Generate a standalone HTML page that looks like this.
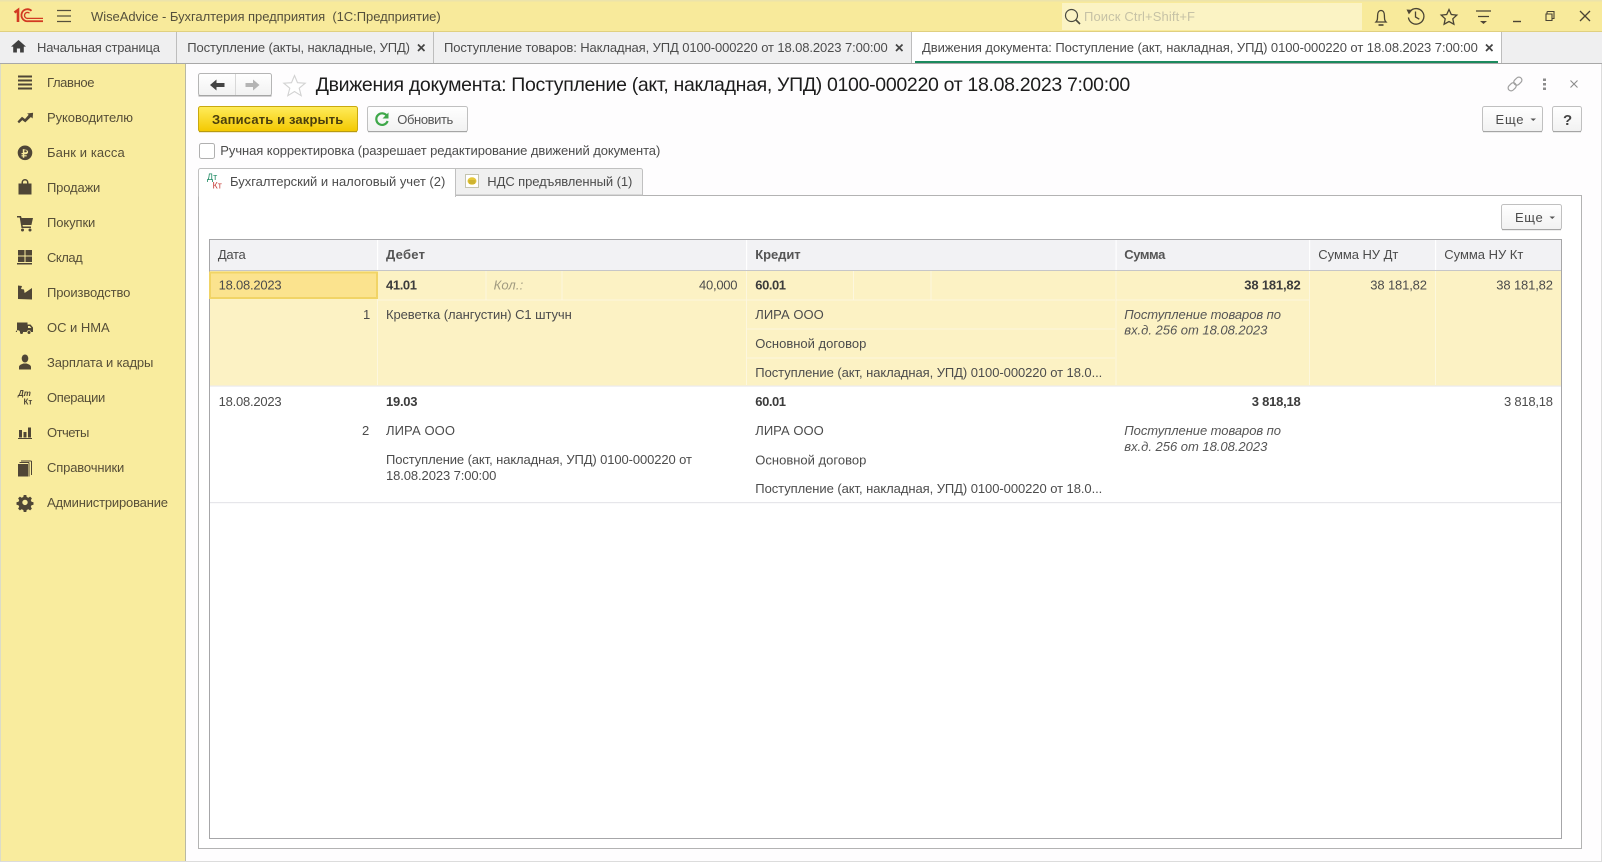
<!DOCTYPE html>
<html lang="ru">
<head>
<meta charset="utf-8">
<title>WiseAdvice - Бухгалтерия предприятия</title>
<style>
html,body{margin:0;padding:0;background:#fff;overflow:hidden}
svg{display:block;filter:blur(.3px)}
text{font-family:"Liberation Sans",Arial,sans-serif;font-size:13px;fill:#4c4c4c;white-space:pre}
.nav text{fill:#574f38}
.b{font-weight:bold;fill:#3c3c3c}
.i{font-style:italic;fill:#555}
.ic{fill:#4f4636}
.tl{fill:none;stroke:#4a4434;stroke-width:1.3}
</style>
</head>
<body>
<svg xmlns="http://www.w3.org/2000/svg" width="1602" height="862" viewBox="0 0 1602 862" lang="ru">
<defs>
<linearGradient id="yb" x1="0" y1="0" x2="0" y2="1"><stop offset="0" stop-color="#ffec5c"/><stop offset="1" stop-color="#f3c800"/></linearGradient>
<linearGradient id="wb" x1="0" y1="0" x2="0" y2="1"><stop offset="0" stop-color="#ffffff"/><stop offset="1" stop-color="#f1f1f1"/></linearGradient>
</defs>

<!-- page -->
<rect width="1602" height="862" fill="#fefdfe"/>
<rect x="0" y="861" width="1602" height="1" fill="#dcdcdc"/>
<rect x="1601" y="32" width="1" height="830" fill="#dcdcdc"/>

<!-- title bar -->
<rect width="1602" height="32" fill="#f8ea9b"/>
<rect width="1602" height="1.500" fill="#ece3ab"/>
<rect y="31" width="1602" height="1" fill="#e0d080"/>
<g fill="none" stroke="#d23a22">
  <path d="M14.500 12.500l3.500-2.500v12" stroke-width="2.600"/>
  <path d="M31.500 10.800a6 6 0 1 0 -3.500 10.400" stroke-width="1.800"/>
  <path d="M29.500 13.200a3 3 0 1 0 -1.500 5.200h15" stroke-width="1.300"/>
  <path d="M28 21.200h15" stroke-width="1.800"/>
</g>
<path d="M57 10.500h14M57 16h14M57 21.500h14" stroke="#55503c" stroke-width="1.200" fill="none"/>
<text x="91" y="21" textLength="349.700" style="fill:#55503c">WiseAdvice - Бухгалтерия предприятия  (1С:Предприятие)</text>
<rect x="1062" y="3" width="300" height="27" fill="#fbf3c4"/>
<circle cx="1071.500" cy="15.500" r="6" fill="none" stroke="#4a4a40" stroke-width="1.200"/>
<path d="M1076 20l4 4" stroke="#4a4a40" stroke-width="1.600"/>
<text x="1084" y="21" textLength="111" style="fill:#c6c2a6">Поиск Ctrl+Shift+F</text>
<!-- bell -->
<path class="tl" d="M1376 22c1.500-1.500 1.500-3 1.600-6.500 0-3.200 1.400-5 3.400-5s3.400 1.800 3.400 5c.1 3.500.1 5 1.600 6.500z"/>
<path d="M1378.500 25h5" stroke="#4a4434" stroke-width="1.600"/>
<!-- history -->
<path class="tl" d="M1410 11.500a7.800 7.800 0 1 1-1.600 6M1415.500 11.500v5.500l3.800 2.200"/>
<path class="ic" d="M1406.500 9.500l6 .4-3.600 4.500z"/>
<!-- star -->
<path class="tl" d="M1449 9.500l2.300 5 5.500.6-4 3.700 1.100 5.400-4.900-2.700-4.900 2.700 1.100-5.400-4-3.700 5.500-.6z"/>
<!-- filter -->
<path d="M1476 11h15M1478 16.500h11" stroke="#4a4434" stroke-width="1.200" fill="none"/>
<path class="ic" d="M1480 21h7l-3.500 3z"/>
<!-- window controls -->
<path d="M1513 21.500h8" stroke="#4a4434" stroke-width="1.400"/>
<path class="tl" d="M1547 14v-1.500a1 1 0 0 1 1-1h6v7h-2M1547 14h5v6.500h-6V14z" style="stroke-width:1.100"/>
<path d="M1580 11L1590 21M1590 11L1580 21" fill="none" stroke="#4a4434" stroke-width="1.300"/>

<!-- tabs bar -->
<rect y="32" width="1602" height="31" fill="#efeff0"/>
<rect y="63" width="1602" height="1" fill="#a8a8a8"/>
<rect x="912" y="32" width="589" height="31" fill="#fff"/>
<g fill="#bdbdbd">
  <rect x="176" y="32" width="1" height="31"/>
  <rect x="433" y="32" width="1" height="31"/>
  <rect x="911" y="32" width="1" height="31"/>
  <rect x="1501" y="32" width="1" height="31"/>
</g>
<rect x="915" y="61" width="583" height="2" fill="#1c8a5e"/>
<path class="ic" style="fill:#3f3f3f" d="M18.500 40l7.500 6.600h-2.200v5.900h-3.700v-4h-3.200v4h-3.700v-5.900H11z"/>
<text x="37" y="52" textLength="123">Начальная страница</text>
<text x="187.300" y="52" textLength="222.700">Поступление (акты, накладные, УПД)</text>
<text x="444" y="52" textLength="443.700">Поступление товаров: Накладная, УПД 0100-000220 от 18.08.2023 7:00:00</text>
<text x="922" y="52" textLength="555.800">Движения документа: Поступление (акт, накладная, УПД) 0100-000220 от 18.08.2023 7:00:00</text>
<g stroke="#444" stroke-width="1.700" fill="none">
  <path d="M418 44.500l6.500 6.500M424.500 44.500l-6.500 6.500"/>
  <path d="M896 44.500l6.500 6.500M902.500 44.500l-6.500 6.500"/>
  <path d="M1486 44.500l6.500 6.500M1492.500 44.500l-6.500 6.500"/>
</g>

<!-- sidebar -->
<rect y="64" width="185" height="797" fill="#f9ec9e"/>
<rect x="0" y="64" width="1" height="797" fill="#dcdcc8"/>
<rect x="185" y="64" width="1" height="797" fill="#b9b9a4"/>
<g class="nav">
  <text x="47" y="87" textLength="47.500">Главное</text>
  <text x="47" y="122" textLength="86">Руководителю</text>
  <text x="47" y="157" textLength="77.700">Банк и касса</text>
  <text x="47" y="192" textLength="53.300">Продажи</text>
  <text x="47" y="227" textLength="48.300">Покупки</text>
  <text x="47" y="262" textLength="35.700">Склад</text>
  <text x="47" y="297" textLength="83.300">Производство</text>
  <text x="47" y="332" textLength="62.700">ОС и НМА</text>
  <text x="47" y="367" textLength="106.300">Зарплата и кадры</text>
  <text x="47" y="402" textLength="58.300">Операции</text>
  <text x="47" y="437" textLength="42.300">Отчеты</text>
  <text x="47" y="472" textLength="77.300">Справочники</text>
  <text x="47" y="507" textLength="121">Администрирование</text>
</g>
<g class="ic">
  <!-- главное -->
  <rect x="18" y="75.500" width="14" height="2"/><rect x="18" y="79.500" width="14" height="2"/><rect x="18" y="83.500" width="14" height="2"/><rect x="18" y="87.500" width="14" height="2"/>
  <!-- руководитель -->
  <path d="M17.500 121.500l4.500-4.800 3 2.300 3.700-4.200-1.600-1.300 6-.8-.5 5.800-1.700-1.500-5.600 5.400-3-2.300-3.300 3.200z"/>
  <!-- банк -->
  <path fill-rule="evenodd" d="M25 145.500a7.300 7.300 0 1 1 0 14.600a7.300 7.300 0 0 1 0-14.600zM22.800 149v4h-1.300v1.200h1.300v1h-1.300v1.200h1.300v1.400h1.500v-1.400h2.400v-1.200h-2.400v-1h1.600a2.200 2.200 0 0 0 0-4.400zm1.500 1.300h1.500a1 1 0 0 1 0 2h-1.500z"/>
  <!-- продажи -->
  <path fill-rule="evenodd" d="M18.500 183.500h3v-1a3.500 3.500 0 0 1 7 0v1h3v11h-13zM23 183.500h4v-1a2 2 0 0 0-4 0z"/>
  <!-- покупки -->
  <path d="M17 216h4l.6 2H33l-1.600 7H22.500l.4 1.500H31V228H21.500L19.700 217.500H17z"/>
  <circle cx="22.500" cy="230" r="1.500"/><circle cx="30" cy="230" r="1.500"/>
  <!-- склад -->
  <rect x="18" y="250" width="6.500" height="5.500"/><rect x="25.500" y="250" width="6.500" height="5.500"/><rect x="18" y="256.500" width="6.500" height="5.500"/><rect x="25.500" y="256.500" width="6.500" height="5.500"/><rect x="17" y="263" width="15" height="1.500"/>
  <!-- производство -->
  <path d="M18 299v-13.500l4 .5-1 3 3 .5.600 3.500 7.400-5v11.500z"/>
  <!-- ос -->
  <path fill-rule="evenodd" d="M17 322.500h10.500v2h3l2.500 3v4.500h-2a2.200 2.200 0 0 0-4.300 0h-6.700a2.200 2.200 0 0 0-4.300 0H17zM28 326v2h3.300l-1.500-2z"/>
  <circle cx="21.500" cy="332.500" r="1.500"/><circle cx="29" cy="332.500" r="1.500"/>
  <!-- зарплата -->
  <ellipse cx="25" cy="358.500" rx="3.300" ry="4"/>
  <path d="M19 369.500v-2.500c0-2 2.500-2.700 4.500-3.500h3c2 .8 4.500 1.500 4.500 3.500v2.500z"/>
  <!-- отчеты -->
  <rect x="19" y="430" width="3" height="7.500"/><rect x="23.500" y="432" width="3" height="5.500"/><rect x="28" y="427.500" width="3" height="10"/><rect x="18" y="438" width="14" height="1"/>
  <!-- справочники -->
  <rect x="18" y="464" width="10" height="12.500"/>
  <path d="M29 462.500v14M31.500 461v14" stroke="#4f4636" stroke-width="1" fill="none"/>
  <path d="M19.500 462.500H29M21 461h10.500" stroke="#4f4636" stroke-width="1" fill="none"/>
  <!-- gear -->
  <path fill-rule="evenodd" d="M23.700 495h2.600l.4 2 1.700.7 1.700-1.100 1.800 1.800-1.100 1.700.7 1.700 2 .4v2.600l-2 .4-.7 1.700 1.100 1.700-1.800 1.800-1.700-1.100-1.700.7-.4 2h-2.600l-.4-2-1.700-.7-1.700 1.100-1.800-1.800 1.100-1.700-.7-1.700-2-.4v-2.600l2-.4.7-1.700-1.100-1.700 1.800-1.800 1.700 1.100 1.700-.7zM25 499.700a2.700 2.700 0 1 0 0 5.400a2.700 2.700 0 0 0 0-5.400z"/>
</g>
<text x="18" y="396" style="font-size:8px;font-weight:bold;font-style:italic;fill:#4f4636">Дт</text>
<text x="23.500" y="404.500" style="font-size:8px;font-weight:bold;fill:#4f4636">Кт</text>

<!-- form header -->
<rect x="198.500" y="73.500" width="73" height="22" rx="2" fill="url(#wb)" stroke="#b5b5b5"/>
<rect x="198.500" y="95" width="73" height="1.500" fill="#a5a5a5"/>
<rect x="235" y="74" width="1" height="21" fill="#d8d8d8"/>
<path d="M210 85l6.500-5.500v3.500h8v4h-8v3.500z" fill="#444"/>
<path d="M259.500 85l-6.500-5.500v3.500h-7.500v4h7.500v3.500z" fill="#b4b4b4"/>
<path d="M294.500 75.500l3 7.200 7.700.5-6 5 2 7.500-6.700-4.200-6.700 4.200 2-7.500-6-5 7.700-.5z" fill="#fff" stroke="#d2d2d2" stroke-width="1.100"/>
<text x="315.700" y="91" textLength="814.500" style="font-size:19.500px;fill:#1c1c1c">Движения документа: Поступление (акт, накладная, УПД) 0100-000220 от 18.08.2023 7:00:00</text>
<!-- link -->
<g fill="none" stroke="#a0a0a0" stroke-width="1.200" transform="rotate(-45 1515 84)">
  <rect x="1506.500" y="81" width="9" height="6" rx="3"/><rect x="1514.500" y="81" width="9" height="6" rx="3"/>
</g>
<g fill="#8c8c8c"><rect x="1543" y="78.500" width="3" height="2.500"/><rect x="1543" y="83" width="3" height="2.500"/><rect x="1543" y="87.500" width="3" height="2.500"/></g>
<path d="M1570.500 80.500l7 7M1577.500 80.500l-7 7" stroke="#8c8c8c" stroke-width="1.100"/>

<!-- command bar -->
<rect x="198.500" y="106.500" width="159" height="25" rx="2" fill="url(#yb)" stroke="#c9a90f"/>
<rect x="199" y="131" width="158" height="1.200" fill="#b89a10"/>
<text x="212" y="124" textLength="131.300" class="b" style="fill:#4a3e0c">Записать и закрыть</text>
<rect x="367.500" y="106.500" width="100" height="25" rx="2" fill="url(#wb)" stroke="#c0c0c0"/>
<rect x="368" y="131" width="99" height="1.200" fill="#a5a5a5"/>
<path d="M387 116a5.800 5.800 0 1 0 .6 5" fill="none" stroke="#3fa84a" stroke-width="2.200"/>
<path d="M388.500 112.500v6h-6z" fill="#3fa84a"/>
<text x="397.300" y="124" textLength="56" style="fill:#555">Обновить</text>
<rect x="1482.500" y="106.500" width="60" height="25" rx="2" fill="url(#wb)" stroke="#c0c0c0"/>
<rect x="1483" y="131" width="59" height="1.200" fill="#a5a5a5"/>
<text x="1495.500" y="124" textLength="28">Еще</text>
<path d="M1530.500 118.500h5.500l-2.750 2.500z" fill="#555"/>
<rect x="1552.500" y="106.500" width="29" height="25" rx="2" fill="url(#wb)" stroke="#c0c0c0"/>
<rect x="1553" y="131" width="28" height="1.200" fill="#a5a5a5"/>
<text x="1563" y="125" style="font-size:15px;font-weight:bold;fill:#444">?</text>

<!-- checkbox -->
<rect x="199.500" y="143.500" width="15" height="15" rx="2" fill="#fff" stroke="#b0b0b0"/>
<text x="220.300" y="155" textLength="440">Ручная корректировка (разрешает редактирование движений документа)</text>

<!-- page tabs -->
<rect x="198.500" y="195.500" width="1383" height="653" fill="#fff" stroke="#b3b3b3"/>
<path d="M455.500 195v-26.500h185a2 2 0 0 1 2 2V195z" fill="#f0f0f0" stroke="#c0c0c0"/>
<path d="M198.500 196v-25.500a2 2 0 0 1 2-2h255v28z" fill="#fff" stroke="#c0c0c0"/>
<rect x="199" y="195" width="256" height="2" fill="#fff"/>
<text x="207" y="180" style="font-size:9px;fill:#1f8a64">Дт</text>
<text x="212.500" y="188.500" style="font-size:9px;fill:#c6403a">Кт</text>
<text x="230" y="186" textLength="215.300">Бухгалтерский и налоговый учет (2)</text>
<rect x="465.500" y="174.500" width="13" height="13" fill="#fff" stroke="#c4c4b0"/>
<ellipse cx="472" cy="181" rx="4.500" ry="3.800" fill="#e6c83a"/>
<path d="M468.500 181h7M469 183h6" stroke="#a89020" stroke-width=".7"/>
<text x="487.300" y="186" textLength="145">НДС предъявленный (1)</text>

<rect x="1501.500" y="204.500" width="60" height="25" rx="2" fill="url(#wb)" stroke="#c0c0c0"/>
<rect x="1502" y="229" width="59" height="1.200" fill="#a5a5a5"/>
<text x="1515" y="222" textLength="27.700">Еще</text>
<path d="M1549.500 216.500h5.500l-2.750 2.500z" fill="#555"/>

<!-- table -->
<rect x="209.500" y="239.500" width="1352" height="599" fill="#fff" stroke="#a6a6a8"/>
<rect x="210" y="240" width="1351" height="30.500" fill="#f2f2f4"/>
<rect x="210" y="270" width="1351" height="1.200" fill="#c6c6c8"/>
<g fill="#fff">
  <rect x="377" y="240" width="1.200" height="30"/><rect x="746" y="240" width="1.200" height="30"/><rect x="1115.500" y="240" width="1.200" height="30"/><rect x="1309" y="240" width="1.200" height="30"/><rect x="1435" y="240" width="1.200" height="30"/>
</g>
<text x="217.900" y="259" textLength="27.800">Дата</text>
<text x="386" y="259" textLength="39" class="b" style="fill:#555">Дебет</text>
<text x="755.300" y="259" textLength="45.300" class="b" style="fill:#555">Кредит</text>
<text x="1124.300" y="259" textLength="41" class="b" style="fill:#555">Сумма</text>
<text x="1318.300" y="259" textLength="80">Сумма НУ Дт</text>
<text x="1444.300" y="259" textLength="79">Сумма НУ Кт</text>

<!-- row 1 -->
<rect x="210" y="271" width="1351" height="114.500" fill="#fcf2c4"/>
<g fill="#fff" opacity=".45">
  <rect x="377" y="271" width="1" height="114"/><rect x="746" y="271" width="1" height="114"/><rect x="1115.500" y="271" width="1" height="114"/><rect x="1309" y="271" width="1" height="114"/><rect x="1435" y="271" width="1" height="114"/>
  <rect x="378" y="299.500" width="368" height="1"/><rect x="747" y="299.500" width="368" height="1"/><rect x="1116" y="299.500" width="193" height="1"/>
  <rect x="747" y="328.500" width="368" height="1"/><rect x="747" y="357.500" width="368" height="1"/>
  <rect x="485.500" y="271" width="1" height="29"/><rect x="561.500" y="271" width="1" height="29"/><rect x="853" y="271" width="1" height="29"/><rect x="930.500" y="271" width="1" height="29"/>
</g>
<rect x="210" y="272.500" width="167" height="25.500" fill="#fbe38e" stroke="#f1d466" stroke-width="2"/>
<text x="218.600" y="289.500" textLength="63">18.08.2023</text>
<text x="386" y="289.500" textLength="31" class="b">41.01</text>
<text x="493.600" y="289.500" textLength="29.600" class="i" style="fill:#a09a80">Кол.:</text>
<text x="699" y="289.500" textLength="38.500">40,000</text>
<text x="755.300" y="289.500" textLength="30.700" class="b">60.01</text>
<text x="1244.300" y="289.500" textLength="56.400" class="b">38 181,82</text>
<text x="1370.300" y="289.500" textLength="56.700">38 181,82</text>
<text x="1496.300" y="289.500" textLength="56.700">38 181,82</text>
<text x="363" y="319" textLength="6">1</text>
<text x="386" y="319" textLength="185.800">Креветка (лангустин) С1 штучн</text>
<text x="755.300" y="319" textLength="68.400">ЛИРА ООО</text>
<text x="755.300" y="348" textLength="111">Основной договор</text>
<text x="755.300" y="377" textLength="347">Поступление (акт, накладная, УПД) 0100-000220 от 18.0...</text>
<text x="1124.300" y="319" textLength="156.700" class="i">Поступление товаров по</text>
<text x="1124.300" y="334.500" textLength="143" class="i">вх.д. 256 от 18.08.2023</text>
<rect x="210" y="385.500" width="1351" height="1.200" fill="#ebebee"/>

<!-- row 2 -->
<text x="218.600" y="406" textLength="63">18.08.2023</text>
<text x="386" y="406" textLength="31.500" class="b">19.03</text>
<text x="755.300" y="406" textLength="30.700" class="b">60.01</text>
<text x="1251.700" y="406" textLength="49" class="b">3 818,18</text>
<text x="1504" y="406" textLength="49">3 818,18</text>
<text x="362" y="435" textLength="7">2</text>
<text x="386" y="435" textLength="69">ЛИРА ООО</text>
<text x="755.300" y="435" textLength="68.400">ЛИРА ООО</text>
<text x="386" y="464" textLength="306">Поступление (акт, накладная, УПД) 0100-000220 от</text>
<text x="386" y="480" textLength="110.400">18.08.2023 7:00:00</text>
<text x="755.300" y="464.500" textLength="111">Основной договор</text>
<text x="755.300" y="493" textLength="347">Поступление (акт, накладная, УПД) 0100-000220 от 18.0...</text>
<text x="1124.300" y="435" textLength="156.700" class="i">Поступление товаров по</text>
<text x="1124.300" y="451" textLength="143" class="i">вх.д. 256 от 18.08.2023</text>
<rect x="210" y="502" width="1351" height="1.200" fill="#e6e6ea"/>
</svg>
</body>
</html>
